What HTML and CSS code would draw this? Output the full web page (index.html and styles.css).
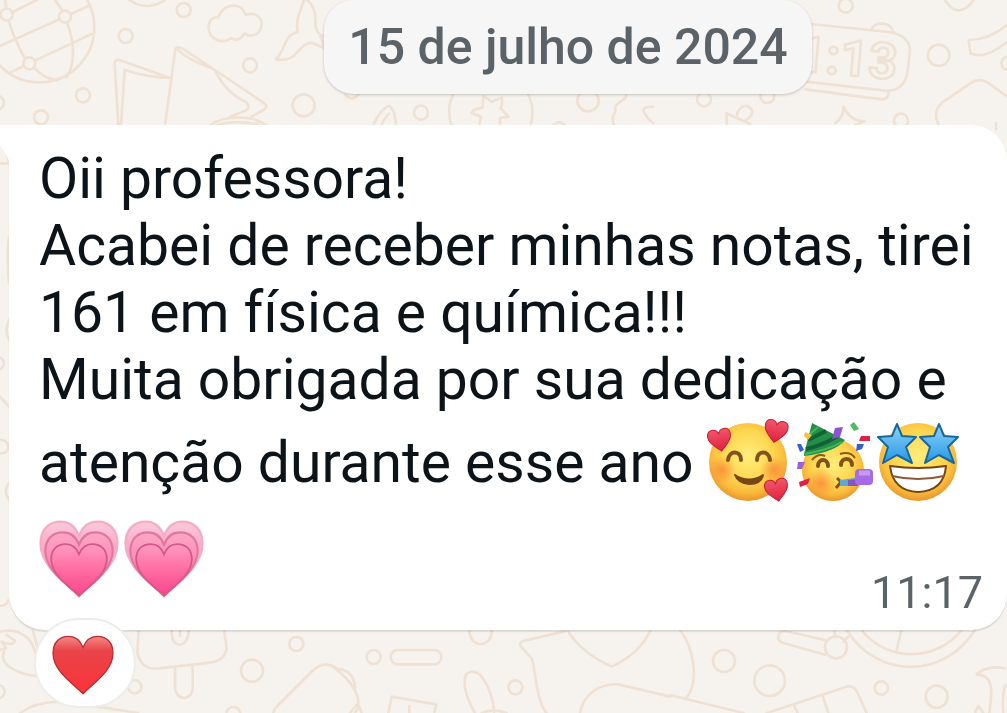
FILE: index.html
```
<!DOCTYPE html>
<html lang="pt-BR">
<head>
  <meta charset="UTF-8"/>
  <meta name="viewport" content="width=device-width,initial-scale=1"/>
  <title>Conversa</title>
  <link rel="stylesheet" href="styles.css">
</head>
<body>

<!-- wallpaper -->
<svg class="wallpaper" viewBox="0 0 3021 2139" preserveAspectRatio="xMinYMin slice" aria-hidden="true">
  <!-- top left: globe, map, cloud -->
  <g>
    <circle cx="118" cy="82" r="165"/>
    <circle cx="20" cy="44" r="18"/><circle cx="195" cy="50" r="18"/><circle cx="88" cy="190" r="18"/>
    <path d="M15 0l4 26M38 36L110 0M0 138L178 58M213 42L265 18M26 62Q42 118 75 176M106 181L275 102M30 218L72 198M165 0L188 33M201 68C225 130 226 190 200 232M102 202Q130 235 165 239"/>
    <path d="M388 0Q440 36 495 0"/>
    <circle cx="551" cy="30" r="21"/><circle cx="377" cy="108" r="21"/><circle cx="249" cy="286" r="21"/><circle cx="123" cy="352" r="21"/><circle cx="-8" cy="308" r="20"/>
    <circle cx="750" cy="196" r="21"/><circle cx="911" cy="316" r="33"/>
    <path d="M655 52C670 8 724 5 737 45C765 33 790 55 784 80C778 108 748 112 733 100C722 122 704 120 692 115C665 134 628 118 626 84C625 63 636 50 655 52Z"/>
    <path d="M912 0C905 32 885 50 893 96C850 105 858 150 827 178C895 190 892 130 935 128L975 145M920 0C950 20 945 55 947 80Q950 105 975 110"/>
    <path d="M355 375L344 190Q344 178 358 180L510 234Q430 230 374 209L363 375M495 375L526 148Q530 138 545 144L640 207L790 308Q808 320 790 330L755 350M535 150Q555 175 635 205M645 212C670 260 700 290 738 306Q755 322 735 332L690 350M632 375C670 345 760 345 798 375M650 375Q710 358 780 375"/>
  </g>
  <!-- around the date -->
  <g transform="translate(960 0)">
    <path d="M0 110Q10 120 10 145M75 285Q95 305 115 285M160 375C175 340 195 320 207 318C222 325 225 350 228 375M185 375Q195 350 207 342"/>
    <circle cx="303" cy="338" r="21"/><circle cx="804" cy="302" r="32"/>
    <path d="M400 283Q378 325 394 375M624 283Q646 325 632 375M478 375L483 350L455 338Q455 330 488 322L490 288L515 305L545 293Q550 300 542 325L565 350L540 354L540 375M918 283C925 300 885 305 885 325Q890 335 880 345Q876 360 882 375M1000 320Q970 320 970 330Q975 350 1000 370M700 375Q718 360 735 375"/>
  </g>
  <!-- top right: clock, star, hexagon -->
  <g transform="translate(2016 0)">
    <circle cx="521" cy="17" r="21"/><circle cx="800" cy="166" r="32"/><circle cx="96" cy="298" r="21"/><circle cx="286" cy="288" r="21"/><circle cx="687" cy="362" r="21"/><circle cx="1008" cy="190" r="20"/>
    <path d="M818 0Q860 62 905 0M1005 75Q950 120 890 120L895 160Q940 180 1005 125"/>
    <path d="M415 72L650 96Q712 106 714 150L706 220Q694 275 640 272L400 245M400 268L630 298Q652 298 650 272M597 90Q605 70 632 70Q660 74 664 97"/>
    <text class="clock" x="372" y="212" transform="rotate(5 372 212)">1:13</text>
    <path d="M165 375L163 340L235 372M195 350C195 320 225 308 238 328Q248 345 218 363M490 370Q515 350 515 320Q530 360 578 364L550 375M800 375Q780 335 810 308L895 250Q920 232 948 248L1005 290M972 370V388"/>
  </g>
  <!-- beside the bubble -->
  <g>
    <path d="M0 415Q20 435 27 490H0M27 710Q20 760 27 850M27 960Q12 990 27 1020M0 1190L27 1220M27 1450Q8 1470 27 1500"/>
    <circle cx="-6" cy="1090" r="18"/><circle cx="5" cy="1340" r="20"/>
  </g>
  <!-- bottom left: bird, ice lolly -->
  <g transform="translate(0 1800)">
    <path d="M0 18Q20 18 25 0M0 95Q45 85 70 105Q98 120 106 160M98 90L112 140M0 150L18 145L5 125Q40 140 45 122L20 105M12 155Q0 185 35 205Q70 225 110 228"/>
    <circle cx="-6" cy="275" r="20"/><circle cx="404" cy="260" r="20"/><circle cx="889" cy="132" r="21"/><circle cx="756" cy="212" r="33"/><circle cx="700" cy="342" r="21"/>
    <path d="M416 90L412 160Q425 208 470 206L630 188Q675 182 680 145L672 90M525 202V265Q530 294 553 294Q578 290 578 265V198M515 90Q514 134 540 134Q566 130 566 90M540 90V108M60 339Q120 298 200 308T415 339M820 339Q822 325 835 315L940 210Q975 180 1010 205"/>
  </g>
  <!-- bottom middle: pill, paper, balloon -->
  <g transform="translate(1005 1800)">
    <circle cx="116" cy="171" r="21"/><circle cx="541" cy="262" r="21"/><rect x="167" y="150" width="152" height="43" rx="21"/>
    <path d="M403 90Q405 130 437 132Q470 130 470 90M0 205Q70 260 70 310Q55 325 45 339M5 206Q58 210 60 265M60 339L72 318L80 339M160 339L170 290L304 313L298 339M223 318V339"/>
    <path d="M420 339C390 290 375 225 405 216C445 205 475 290 477 335M440 339Q475 325 515 339M690 94L565 123Q550 130 558 140L590 175C600 200 605 310 635 339M700 94Q735 155 830 200Q915 160 947 90M735 339C745 285 790 250 850 253L1005 290"/>
  </g>
  <!-- bottom right: wheel, box, horn -->
  <g transform="translate(2010 1680)">
    <path d="M30 210C70 260 90 370 48 415M0 405L220 459M465 240L345 213Q325 213 325 232Q325 245 340 249L465 284M492 210L496 224M535 230L520 245"/>
    <circle cx="498" cy="262" r="33"/><circle cx="162" cy="303" r="33"/><circle cx="299" cy="362" r="46"/><circle cx="634" cy="384" r="20"/><circle cx="800" cy="410" r="33"/>
    <path d="M530 210C620 355 820 360 915 210M575 210C650 308 800 305 875 210M694 210L680 272M290 459L530 380Q550 375 560 393L590 459M373 438L383 459M458 407L475 459M1005 325Q950 315 920 343C970 345 968 390 958 459M1005 375Q995 410 1000 459M915 459L925 438L940 459"/>
  </g>
</svg>

<!-- shared emoji parts -->
<svg class="defs" aria-hidden="true">
  <defs>
    <radialGradient id="face" cx=".5" cy=".42" r=".59">
      <stop offset="0" stop-color="#ffee7c"/><stop offset=".55" stop-color="#fed650"/><stop offset=".8" stop-color="#f9bb3c"/><stop offset="1" stop-color="#e8922b"/>
    </radialGradient>
    <radialGradient id="cheek">
      <stop offset="0" stop-color="#f98638" stop-opacity=".8"/><stop offset="1" stop-color="#f98638" stop-opacity="0"/>
    </radialGradient>
    <linearGradient id="star" x2="0" y2="1">
      <stop offset="0" stop-color="#8fd3f8"/><stop offset="1" stop-color="#2497e6"/>
    </linearGradient>
    <linearGradient id="red" x2="0" y2="1">
      <stop offset="0" stop-color="#f58a86"/><stop offset=".25" stop-color="#e8444a"/><stop offset="1" stop-color="#fa3338"/>
    </linearGradient>
    <linearGradient id="rose" x2="0" y2="1">
      <stop offset="0" stop-color="#f0576a"/><stop offset="1" stop-color="#e0203d"/>
    </linearGradient>
    <linearGradient id="pink" x2="0" y2="1">
      <stop offset="0" stop-color="#ff9dc0"/><stop offset=".4" stop-color="#ff75a6"/><stop offset="1" stop-color="#fb458b"/>
    </linearGradient>
    <linearGradient id="middle" x2="0" y2="1">
      <stop offset="0" stop-color="#fda6c5"/><stop offset="1" stop-color="#fb6ea0"/>
    </linearGradient>
    <linearGradient id="pale" x2="0" y2="1">
      <stop offset="0" stop-color="#fcc9da"/><stop offset="1" stop-color="#f86fa3"/>
    </linearGradient>
    <path id="heart" d="M50 94C35 78 2 58 2 29C2 11 13 2 27 2C38 2 46 9 50 20C54 9 62 2 73 2C87 2 98 11 98 29C98 58 65 78 50 94Z"/>
    <path id="fivestar" d="M18 -1L23 11L37 12L27 22L33 38L18 30L4 38L9 22L-1 12L13 11Z"/>
    <symbol id="growing" viewBox="0 0 80 80">
      <use href="#heart" transform="translate(0 2) scale(.8 .81)" fill="url(#pale)" stroke="#f3adc6" stroke-width="3"/>
      <use href="#heart" transform="translate(5 13) scale(.7 .69)" fill="url(#middle)" stroke="#e0789e" stroke-width="3"/>
      <use href="#heart" transform="translate(11 25) scale(.58 .56)" fill="url(#pink)" stroke="#d6568a" stroke-width="3"/>
    </symbol>
  </defs>
</svg>

<main class="chat">
  <time class="date" datetime="2024-07-15">15 de julho de 2024</time>

  <article class="bubble">
    <svg class="tail" viewBox="0 0 9 36" aria-hidden="true"><path d="M0 0H9V36Q6 27 0 21Z"/></svg>
    <p class="text">Oii professora!<br>
      Acabei de receber minhas notas, tirei 161 em física e química!!!<br>
      Muita obrigada por sua dedicação e atenção durante esse ano
      <span class="emojis"><svg class="emoji" viewBox="0 0 80 80" role="img" aria-label="rosto com corações">
        <circle cx="40" cy="40" r="39" fill="url(#face)"/>
        <circle cx="14" cy="48" r="14" fill="url(#cheek)"/><circle cx="66" cy="48" r="14" fill="url(#cheek)"/>
        <path d="M20 38C21 28 33 28 33 38M49 38C49 28 61 28 62 38" fill="none" stroke="#80531d" stroke-width="4" stroke-linecap="round"/>
        <path d="M27 53Q41 62 55 53Q53 62 41 62Q30 61 27 53Z" fill="#794716" stroke="#794716" stroke-width="2" stroke-linejoin="round"/>
        <use href="#heart" transform="translate(-2 9) rotate(-10) scale(.24)" fill="url(#rose)" stroke="#c91932" stroke-width="4"/>
        <use href="#heart" transform="translate(58 -4) rotate(10) scale(.24)" fill="url(#rose)" stroke="#c91932" stroke-width="4"/>
        <use href="#heart" transform="translate(55 59) rotate(-10) scale(.24)" fill="url(#rose)" stroke="#c91932" stroke-width="4"/>
      </svg><svg class="emoji" viewBox="0 0 80 80" role="img" aria-label="rosto festivo">
        <circle cx="40" cy="48" r="31" fill="url(#face)"/>
        <circle cx="28" cy="61" r="15" fill="url(#cheek)"/>
        <path d="M11 32L19 1L52 18Q43 30 11 34Z" fill="#249046"/>
        <path d="M15 18L33 9M13 27Q28 24 45 14" stroke="#126238" stroke-width="4" fill="none"/>
        <path d="M17 12L25 5M12 32Q35 28 49 20" stroke="#44b65e" stroke-width="2" fill="none"/>
        <path d="M19 38Q25 31 32 34M47 32Q57 29 62 36" stroke="#8b5a1c" stroke-width="2" fill="none"/>
        <path d="M25 44C25 36 35 36 35 44M48 43C48 35 59 35 59 43" fill="none" stroke="#80531d" stroke-width="4" stroke-linecap="round"/>
        <path d="M44 56L48 60L43 66" fill="none" stroke="#8b501e" stroke-width="3"/>
        <path d="M47 58L62 56V64L47 64Z" fill="#5eaad0"/><path d="M55 58l10-1v7H55z" fill="#8057c5"/>
        <rect x="62" y="47" width="18" height="16" rx="4" fill="#a66be5"/><path d="M66 51H77" stroke="#c79af2" stroke-width="5"/>
        <path d="M12 10L19 13L15 18L11 14Z" fill="#f3c343"/>
        <path d="M42 6L50 5L47 15L39 17Z" fill="#8855cf"/>
        <path d="M57 3L61 0L66 7L61 9Z" fill="#4cbc62"/>
        <path d="M68 14H77V19H66Z" fill="#dc2144"/>
        <path d="M64 22L71 22L69 27L63 29ZM4 22L8 22L11 28L7 30Z" fill="#345fd2"/>
        <path d="M5 40L12 40L9 47L4 47Z" fill="#9b60d5"/>
        <path d="M6 60L17 56L15 62L7 65Z" fill="#dc2144"/>
      </svg><svg class="emoji" viewBox="0 0 80 80" role="img" aria-label="olhos de estrela">
        <circle cx="40" cy="40" r="39" fill="url(#face)"/>
        <g fill="url(#star)" stroke="#17679f" stroke-width="2" stroke-linejoin="round">
          <use href="#fivestar" transform="translate(1 3)"/><use href="#fivestar" transform="translate(43 3)"/>
        </g>
        <path d="M12 44Q40 48 68 44Q66 69 40 70Q15 69 12 44Z" fill="#fff" stroke="#744314" stroke-width="2" stroke-linejoin="round"/>
        <path d="M14 54Q40 60 66 54" fill="none" stroke="#8c5a37" stroke-width="2"/>
      </svg></span>
      <span class="emojis"><svg class="emoji" role="img" aria-label="coração crescendo"><use href="#growing"/></svg><svg class="emoji" role="img" aria-label="coração crescendo"><use href="#growing"/></svg></span>
    </p>
    <time class="time" datetime="11:17">11:17</time>
  </article>

  <button class="reaction" type="button" aria-label="Reação: coração vermelho">
    <svg viewBox="0 0 100 96" aria-hidden="true"><use href="#heart" fill="url(#red)" stroke="#b92a31" stroke-width="2"/></svg>
  </button>
</main>

</body>
</html>
```
FILE: styles.css
```
*{box-sizing:border-box}
body{margin:0;min-height:100vh;background:#f6f3ee;color:#0c141a;font-family:Roboto,sans-serif;overflow:hidden}
.wallpaper{position:fixed;top:0;left:0;width:100%;height:100%;fill:none;stroke:#efe1d4;stroke-width:8;stroke-linejoin:round;stroke-linecap:round}
.clock{font-size:150px;font-weight:700}
.defs{position:absolute;width:0;height:0}

.chat{position:relative;display:flex;flex-direction:column;align-items:flex-start}
.date{align-self:center;margin-left:129px;padding:17px 24px;border-radius:30px;background:#f6f6f6;color:#5b6368;font-size:50px;font-weight:500;line-height:60px;box-shadow:0 1px 3px rgba(0,0,0,.2)}

.bubble{position:relative;display:flex;flex-direction:column;align-self:stretch;margin:31px 0 0 9px;padding:20px 24px 11px 30px;border-radius:0 36px 36px 36px;background:#fff;box-shadow:0 2px 1px rgba(0,0,0,.1)}
.tail{position:absolute;top:0;right:100%;width:9px;height:36px;fill:#fff}
.text{margin:0;font-size:57px;line-height:67px}
.emojis{white-space:nowrap}
.emoji{width:80px;height:80px;margin:9px 5px 7px 0;vertical-align:-27px;overflow:visible}
.time{align-self:flex-end;margin-top:-38px;color:#5b6368;font-size:45px;line-height:52px}

.reaction{position:relative;display:flex;align-items:center;justify-content:center;width:102px;height:90px;margin:-12px 0 0 34px;padding:4px 4px 0 0;border:2px solid #eeedeb;border-radius:45px;background:#fff}
.reaction svg{width:64px;height:60px}
```
